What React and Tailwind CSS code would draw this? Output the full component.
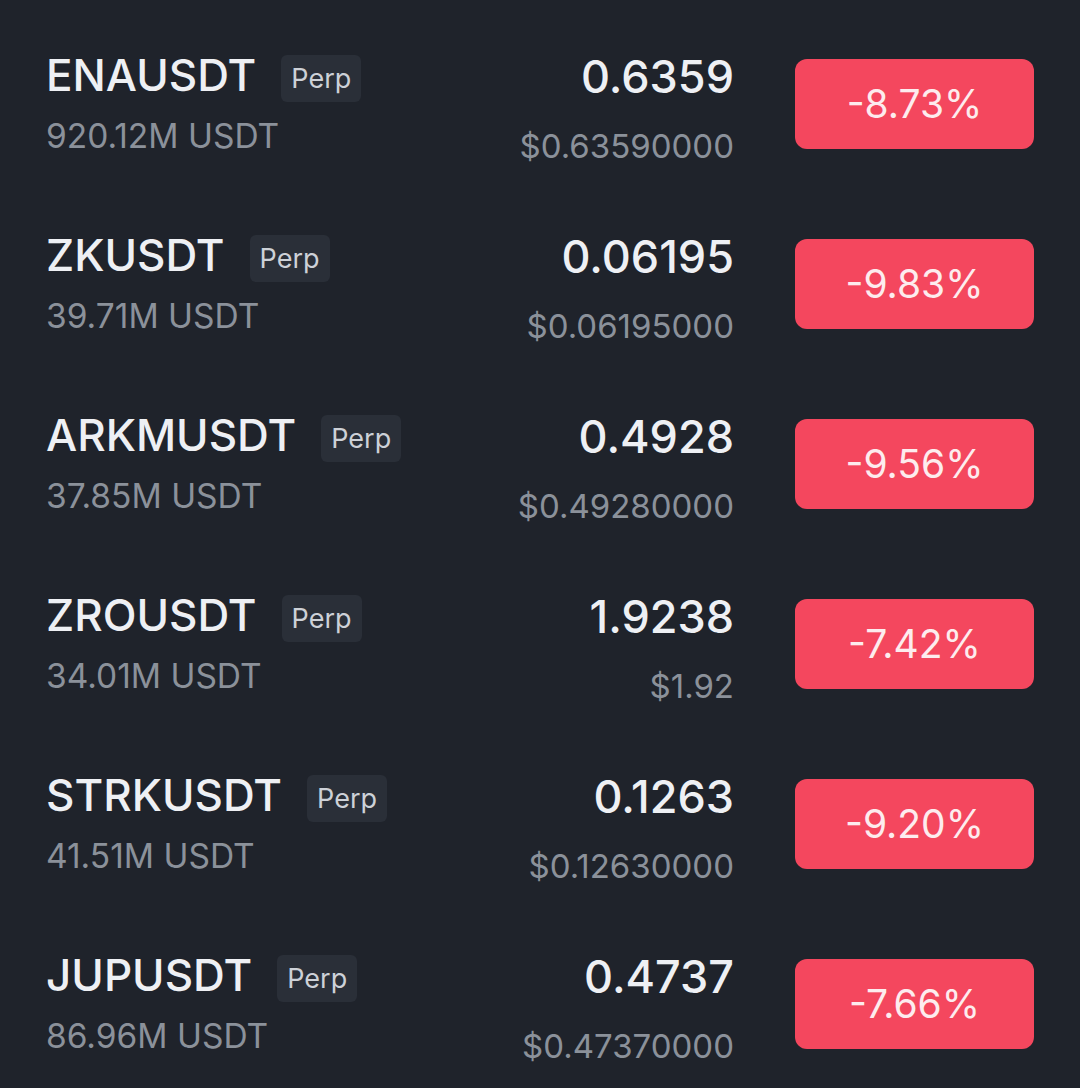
const ROWS = [
  { name: "ENAUSDT", vol: "920.12M USDT", price: "0.6359", usd: "$0.63590000", change: "-8.73%" },
  { name: "ZKUSDT", vol: "39.71M USDT", price: "0.06195", usd: "$0.06195000", change: "-9.83%" },
  { name: "ARKMUSDT", vol: "37.85M USDT", price: "0.4928", usd: "$0.49280000", change: "-9.56%" },
  { name: "ZROUSDT", vol: "34.01M USDT", price: "1.9238", usd: "$1.92", change: "-7.42%" },
  { name: "STRKUSDT", vol: "41.51M USDT", price: "0.1263", usd: "$0.12630000", change: "-9.20%" },
  { name: "JUPUSDT", vol: "86.96M USDT", price: "0.4737", usd: "$0.47370000", change: "-7.66%" },
];

function Row({ item }) {
  return (
    <div className="flex h-[180px] items-start pl-[46px] pr-[46px]">
      <div className="mt-[33px] flex flex-1 flex-col">
        <div className="flex items-start">
          <span className="text-[44px] leading-[56px] font-medium text-[#eef0f4]">{item.name}</span>
          <span className="ml-[25px] mt-[8px] rounded-[6px] bg-[#2a2f38] px-[10px] text-[27px] leading-[47px] text-[#cdd1d7]">
            Perp
          </span>
        </div>
        <span className="mt-[11px] text-[33.5px] leading-[44px] text-[#8b919a]">{item.vol}</span>
      </div>
      <div className="mt-[35px] flex flex-col items-end">
        <span className="text-[45px] leading-[56px] font-medium text-[#eef0f4]">{item.price}</span>
        <span className="mt-[19px] text-[33px] leading-[44px] text-[#8b919a]">{item.usd}</span>
      </div>
      <div className="ml-[61px] mt-[45px] flex h-[90px] w-[239px] items-center justify-center rounded-[12px] bg-[#f4475e] text-[39px] font-normal text-[#fdecee]">
        {item.change}
      </div>
    </div>
  );
}

export default function App() {
  return (
    <div
      className="h-[1088px] w-[1080px] overflow-hidden bg-[#1f232b] pt-[14px]"
      style={{ fontFamily: "Inter, 'Noto Sans', sans-serif" }}
    >
      {ROWS.map((r) => (
        <Row key={r.name} item={r} />
      ))}
    </div>
  );
}
